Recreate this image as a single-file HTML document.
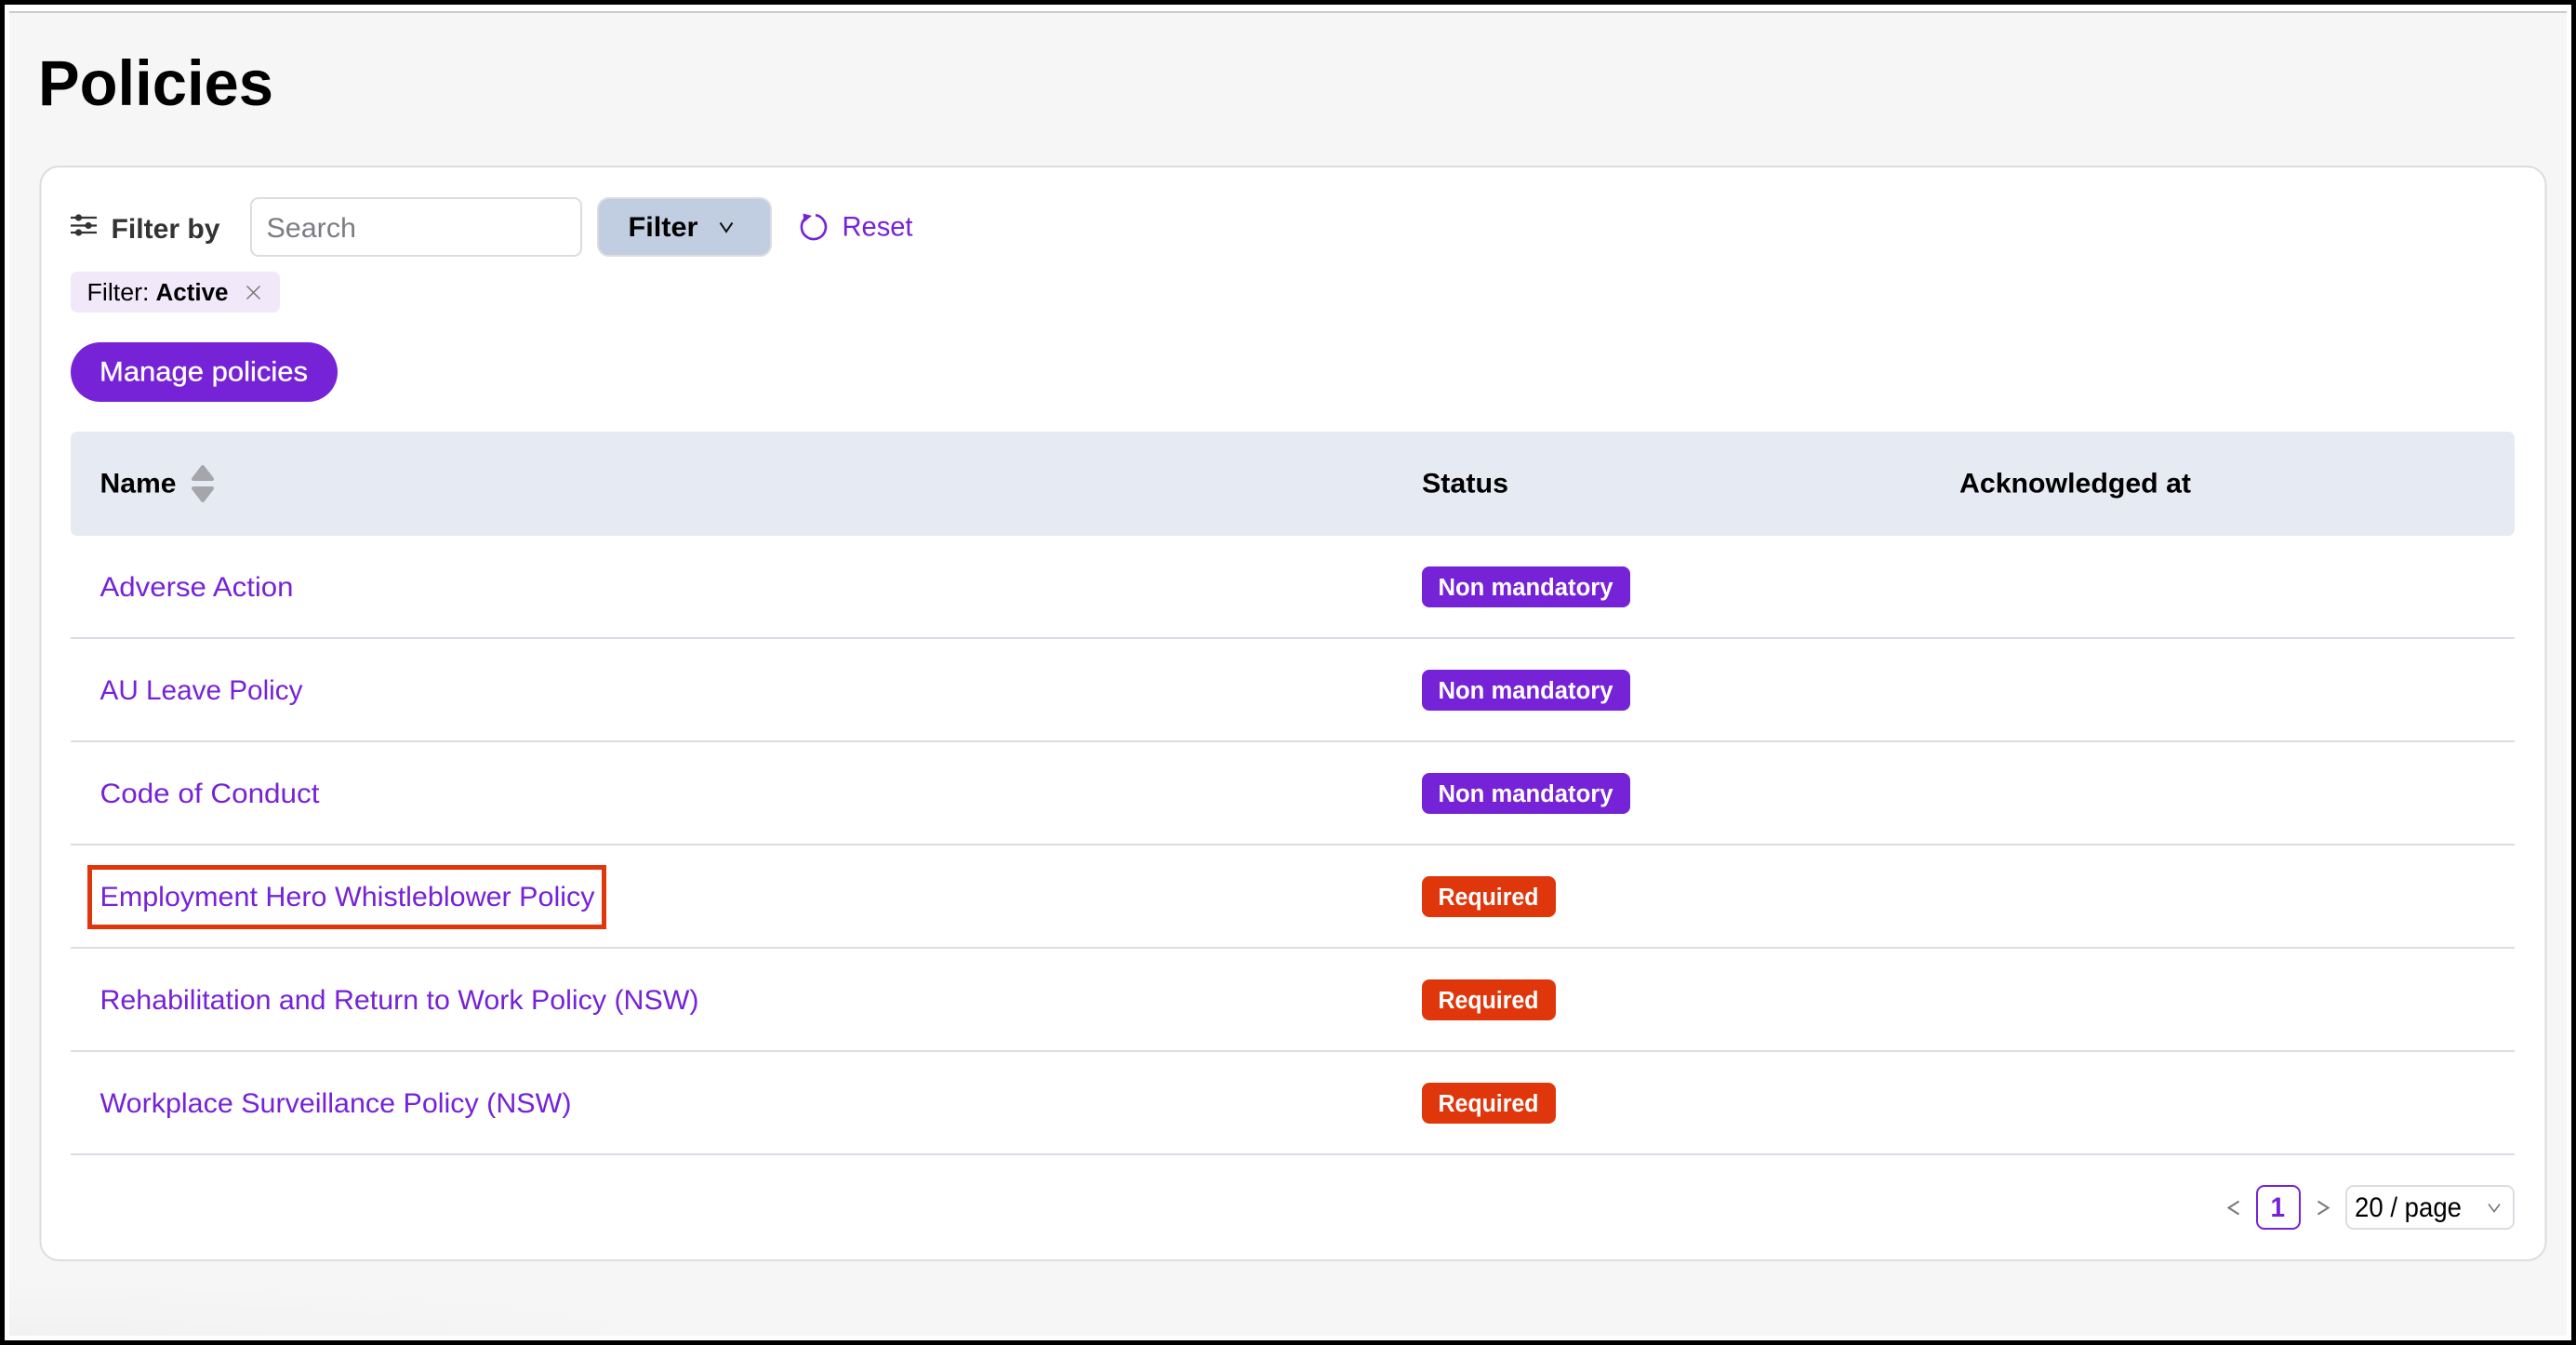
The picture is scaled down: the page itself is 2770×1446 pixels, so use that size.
<!DOCTYPE html>
<html lang="en">
<head>
<meta charset="utf-8">
<title>Policies</title>
<style>
html,body{margin:0;padding:0;background:#000;width:2770px;height:1446px;overflow:hidden}
svg{display:block}
text{font-family:"Liberation Sans",sans-serif;font-size:30px;fill:#000}
.b{font-weight:700}
.link{fill:#7622d7}
.badge{font-weight:700;font-size:25.5px;fill:#fff}
.chip{font-size:25.5px}
</style>
</head>
<body>
<svg xmlns="http://www.w3.org/2000/svg" width="2770" height="1446" viewBox="0 0 2770 1446">
  <defs>
    <radialGradient id="fade" cx="0" cy="1" r="1">
      <stop offset="0" stop-color="#f1f1f1"/>
      <stop offset="1" stop-color="#f6f6f6" stop-opacity="0"/>
    </radialGradient>
  </defs>
  <!-- screenshot frame -->
  <rect x="0" y="0" width="2770" height="1446" fill="#000"/>
  <rect x="5" y="5" width="2760" height="1436" fill="#fff"/>
  <rect x="10" y="12" width="2750" height="1424" fill="#f6f6f6"/>
  <rect x="10" y="1358" width="1000" height="78" fill="url(#fade)"/>
  <rect x="10" y="12" width="2750" height="2" fill="#cbcbcb"/>

  <text x="41" y="113" class="b" style="font-size:69px" textLength="253" lengthAdjust="spacingAndGlyphs">Policies</text>

  <!-- card -->
  <rect x="43.5" y="179" width="2694" height="1176" rx="20" fill="#fff" stroke="#dcdce2" stroke-width="2"/>

  <!-- filter icon -->
  <g stroke="#333" stroke-width="2.2" fill="#333">
    <line x1="76" y1="234" x2="104" y2="234"/>
    <line x1="76" y1="242.5" x2="104" y2="242.5"/>
    <line x1="76" y1="250" x2="104" y2="250"/>
    <circle cx="84.5" cy="234" r="3.6" stroke="none"/>
    <circle cx="95" cy="242.5" r="3.6" stroke="none"/>
    <circle cx="84.5" cy="250" r="3.6" stroke="none"/>
  </g>
  <text x="119.5" y="256" class="b" style="fill:#333" textLength="117" lengthAdjust="spacingAndGlyphs">Filter by</text>

  <!-- search -->
  <rect x="270" y="213" width="355" height="62" rx="8" fill="#fff" stroke="#dcdce2" stroke-width="2"/>
  <text x="286.5" y="255" style="fill:#7c7c84" textLength="96.5" lengthAdjust="spacingAndGlyphs">Search</text>

  <!-- filter button -->
  <rect x="643" y="213" width="186" height="62" rx="12" fill="#c1cde0" stroke="#dcdce2" stroke-width="2"/>
  <text x="675.5" y="254" class="b" textLength="75" lengthAdjust="spacingAndGlyphs">Filter</text>
  <path d="M774.5 239.5 L781 249 L787.5 239.5" fill="none" stroke="#111" stroke-width="2"/>

  <!-- reset -->
  <path d="M877 231.2 A13 13 0 1 1 866 234.6" fill="none" stroke="#7622d7" stroke-width="2.6"/>
  <polygon points="863.5,229.5 873,232 864.5,239" fill="#7622d7"/>
  <text x="905.5" y="253.5" class="link" textLength="76" lengthAdjust="spacingAndGlyphs">Reset</text>

  <!-- chip -->
  <rect x="76" y="292" width="225" height="44" rx="7" fill="#f1e9f9"/>
  <text x="93.5" y="323" class="chip" textLength="67" lengthAdjust="spacingAndGlyphs">Filter:</text>
  <text x="167.5" y="323" class="chip b" textLength="78" lengthAdjust="spacingAndGlyphs">Active</text>
  <path d="M265.5 307.5 L279.5 321.5 M279.5 307.5 L265.5 321.5" stroke="#777" stroke-width="1.5" fill="none"/>

  <!-- manage -->
  <rect x="76" y="368" width="287" height="64" rx="32" fill="#7622d7"/>
  <text x="107" y="409.5" style="fill:#fff;stroke:#fff;stroke-width:.35" textLength="224" lengthAdjust="spacingAndGlyphs">Manage policies</text>

  <!-- table head -->
  <rect x="76" y="464" width="2628" height="112" rx="7" fill="#e6eaf2"/>
  <text x="107.5" y="529.5" class="b" textLength="82" lengthAdjust="spacingAndGlyphs">Name</text>
  <polygon points="218,502 208,515 228,515" fill="#a5a6ab" stroke="#a5a6ab" stroke-width="4" stroke-linejoin="round"/>
  <polygon points="208,525 228,525 218,538" fill="#a5a6ab" stroke="#a5a6ab" stroke-width="4" stroke-linejoin="round"/>
  <text x="1529" y="529.5" class="b" textLength="93" lengthAdjust="spacingAndGlyphs">Status</text>
  <text x="2107" y="529.5" class="b" textLength="249" lengthAdjust="spacingAndGlyphs">Acknowledged at</text>

  <!-- rows -->
  <g fill="#dcdce4">
    <rect x="76" y="685" width="2628" height="2"/>
    <rect x="76" y="796" width="2628" height="2"/>
    <rect x="76" y="907" width="2628" height="2"/>
    <rect x="76" y="1018" width="2628" height="2"/>
    <rect x="76" y="1129" width="2628" height="2"/>
    <rect x="76" y="1240" width="2628" height="2"/>
  </g>

  <text x="107.5" y="641" class="link" textLength="208" lengthAdjust="spacingAndGlyphs">Adverse Action</text>
  <text x="107.5" y="752" class="link" textLength="218" lengthAdjust="spacingAndGlyphs">AU Leave Policy</text>
  <text x="107.5" y="863" class="link" textLength="236" lengthAdjust="spacingAndGlyphs">Code of Conduct</text>
  <text x="107.5" y="974" class="link" textLength="532" lengthAdjust="spacingAndGlyphs">Employment Hero Whistleblower Policy</text>
  <text x="107.5" y="1085" class="link" textLength="644" lengthAdjust="spacingAndGlyphs">Rehabilitation and Return to Work Policy (NSW)</text>
  <text x="107.5" y="1196" class="link" textLength="507" lengthAdjust="spacingAndGlyphs">Workplace Surveillance Policy (NSW)</text>

  <!-- highlight -->
  <rect x="96.5" y="932.5" width="553" height="64" fill="none" stroke="#e0360c" stroke-width="5"/>

  <!-- badges -->
  <g fill="#7622d7">
    <rect x="1529" y="609" width="224" height="44" rx="8"/>
    <rect x="1529" y="720" width="224" height="44" rx="8"/>
    <rect x="1529" y="831" width="224" height="44" rx="8"/>
  </g>
  <g fill="#e0360c">
    <rect x="1529" y="942" width="144" height="44" rx="8"/>
    <rect x="1529" y="1053" width="144" height="44" rx="8"/>
    <rect x="1529" y="1164" width="144" height="44" rx="8"/>
  </g>
  <text x="1546.5" y="640" class="badge" textLength="188" lengthAdjust="spacingAndGlyphs">Non mandatory</text>
  <text x="1546.5" y="751" class="badge" textLength="188" lengthAdjust="spacingAndGlyphs">Non mandatory</text>
  <text x="1546.5" y="862" class="badge" textLength="188" lengthAdjust="spacingAndGlyphs">Non mandatory</text>
  <text x="1546.5" y="973" class="badge" textLength="108" lengthAdjust="spacingAndGlyphs">Required</text>
  <text x="1546.5" y="1084" class="badge" textLength="108" lengthAdjust="spacingAndGlyphs">Required</text>
  <text x="1546.5" y="1195" class="badge" textLength="108" lengthAdjust="spacingAndGlyphs">Required</text>

  <!-- pagination -->
  <path d="M2407.5 1291.5 L2396.5 1298.5 L2407.5 1305.5" fill="none" stroke="#777" stroke-width="2"/>
  <rect x="2427" y="1275" width="46" height="46" rx="8" fill="#fff" stroke="#7622d7" stroke-width="2"/>
  <text x="2441.5" y="1308" class="b" style="fill:#7622d7" textLength="15.5" lengthAdjust="spacingAndGlyphs">1</text>
  <path d="M2492.5 1291.5 L2503.5 1298.5 L2492.5 1305.5" fill="none" stroke="#777" stroke-width="2"/>
  <rect x="2523" y="1275" width="180" height="46" rx="8" fill="#fff" stroke="#dcdce2" stroke-width="2"/>
  <text x="2532" y="1308" textLength="115" lengthAdjust="spacingAndGlyphs">20 / page</text>
  <path d="M2676 1294.5 L2682 1302.5 L2688 1294.5" fill="none" stroke="#777" stroke-width="1.6"/>
</svg>
</body>
</html>
